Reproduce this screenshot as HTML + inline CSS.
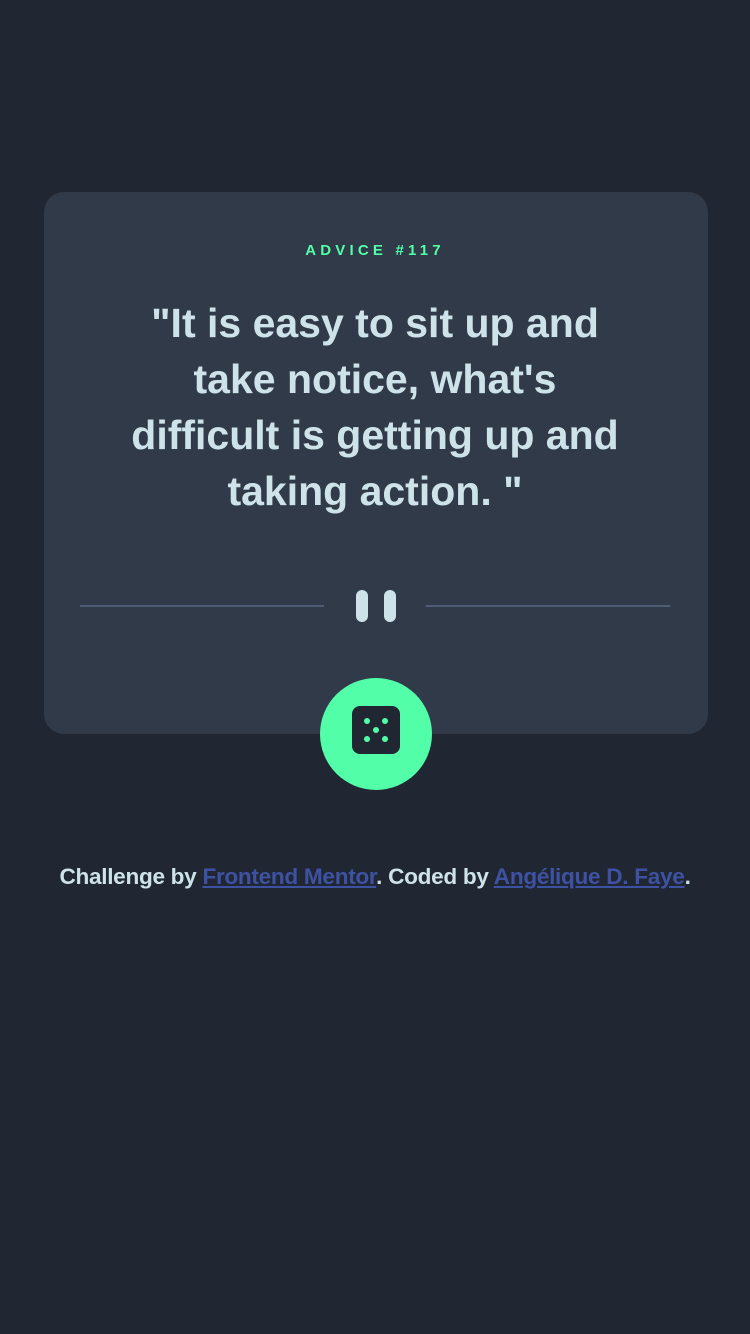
<!DOCTYPE html>
<html><head><meta charset="utf-8"><style>
body{margin:0;width:750px;height:1334px;background:#202632;font-family:"Liberation Sans",sans-serif;position:relative;overflow:hidden}
.card{position:absolute;left:44px;top:192px;width:664px;height:542px;background:#313a48;border-radius:20px}
.lab{position:absolute;top:242px;left:0;width:750px;text-align:center;color:#52ffa8;font-size:15px;font-weight:bold;letter-spacing:4.2px}
.q{position:absolute;top:295px;left:0;width:750px;text-align:center;color:#cee3e9;font-size:41px;font-weight:bold;line-height:56px;letter-spacing:0;white-space:nowrap}
.ln{position:absolute;top:605px;height:2px;background:#4f5d74}
.bar{position:absolute;top:590px;width:12px;height:32px;border-radius:6px;background:#cee3e9}
.btn{position:absolute;left:320px;top:678px;width:112px;height:112px;border-radius:50%;background:#52ffa8}
.f{position:absolute;top:864px;left:0;width:750px;text-align:center;color:#cee3e9;font-size:22.6px;font-weight:bold;letter-spacing:-0.3px}
.f a{color:#3e52a3;text-decoration:underline}
</style></head><body>
<div class="card"></div>
<div class="lab">ADVICE #117</div>
<div class="q">"It is easy to sit up and<br>take notice, what's<br>difficult is getting up and<br>taking action. "</div>
<div class="ln" style="left:80px;width:244px"></div>
<div class="ln" style="left:426px;width:244px"></div>
<div class="bar" style="left:356px"></div>
<div class="bar" style="left:384px"></div>
<div class="btn"></div>
<svg style="position:absolute;left:352px;top:706px" width="48" height="48" viewBox="0 0 48 48">
<rect width="48" height="48" rx="8" fill="#202632"/>
<g fill="#52ffa8"><circle cx="15" cy="15" r="3"/><circle cx="33" cy="15" r="3"/><circle cx="24" cy="24" r="3"/><circle cx="15" cy="33" r="3"/><circle cx="33" cy="33" r="3"/></g></svg>
<div class="f">Challenge by <a>Frontend Mentor</a>. Coded by <a>Angélique D. Faye</a>.</div>
</body></html>
